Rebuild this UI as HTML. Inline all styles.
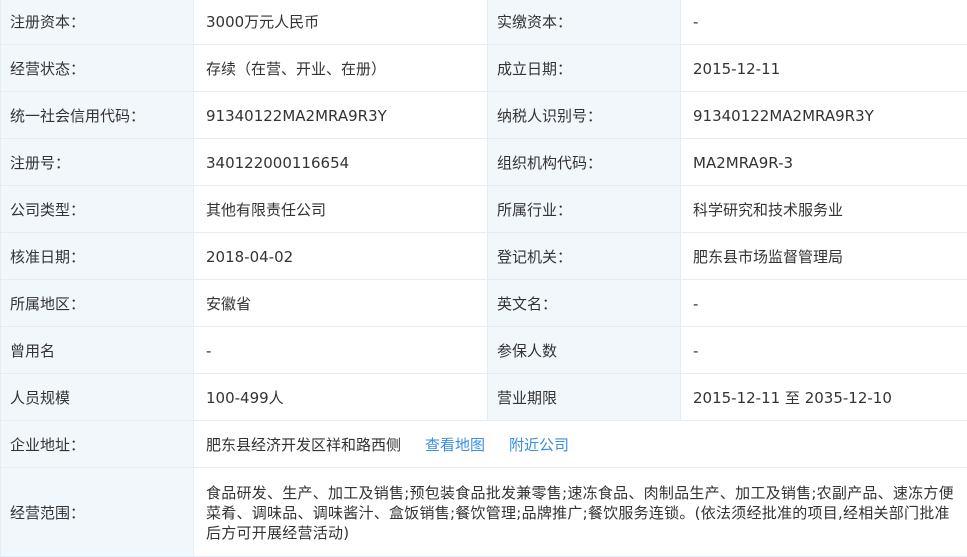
<!DOCTYPE html>
<html><head><meta charset="utf-8"><style>
body{margin:0;width:967px;height:553px;overflow:hidden;background:#fff;font-family:"DejaVu Sans","Noto Sans CJK SC",sans-serif;font-size:15px;color:#333}
table{border-collapse:collapse;position:absolute;top:-3px;left:0;width:968px;table-layout:fixed}
td{border:1px solid #e4ecf4;padding:1px 12px 0;height:45px;vertical-align:middle;line-height:20px;white-space:nowrap}
td.l{background:#f2f7fc;padding-left:9px}
a{color:#3a8ee6;text-decoration:none;margin-left:24px}
</style></head><body>
<table>
<col style="width:193px"><col style="width:294px"><col style="width:193px"><col style="width:288px">
<tr><td class="l">注册资本：</td><td>3000万元人民币</td><td class="l">实缴资本：</td><td>-</td></tr>
<tr><td class="l">经营状态：</td><td>存续（在营、开业、在册）</td><td class="l">成立日期：</td><td>2015-12-11</td></tr>
<tr><td class="l">统一社会信用代码：</td><td>91340122MA2MRA9R3Y</td><td class="l">纳税人识别号：</td><td>91340122MA2MRA9R3Y</td></tr>
<tr><td class="l">注册号：</td><td>340122000116654</td><td class="l">组织机构代码：</td><td>MA2MRA9R-3</td></tr>
<tr><td class="l">公司类型：</td><td>其他有限责任公司</td><td class="l">所属行业：</td><td>科学研究和技术服务业</td></tr>
<tr><td class="l">核准日期：</td><td>2018-04-02</td><td class="l">登记机关：</td><td>肥东县市场监督管理局</td></tr>
<tr><td class="l">所属地区：</td><td>安徽省</td><td class="l">英文名：</td><td>-</td></tr>
<tr><td class="l">曾用名</td><td>-</td><td class="l">参保人数</td><td>-</td></tr>
<tr><td class="l">人员规模</td><td>100-499人</td><td class="l">营业期限</td><td>2015-12-11 至 2035-12-10</td></tr>
<tr><td class="l">企业地址：</td><td colspan="3">肥东县经济开发区祥和路西侧<a>查看地图</a><a>附近公司</a></td></tr>
<tr><td class="l" style="height:87px">经营范围：</td><td colspan="3" style="padding-right:0;letter-spacing:0.25px">食品研发、生产、加工及销售;预包装食品批发兼零售;速冻食品、肉制品生产、加工及销售;农副产品、速冻方便<br>菜肴、调味品、调味酱汁、盒饭销售;餐饮管理;品牌推广;餐饮服务连锁。(依法须经批准的项目,经相关部门批准<br>后方可开展经营活动)</td></tr>
</table>
</body></html>
